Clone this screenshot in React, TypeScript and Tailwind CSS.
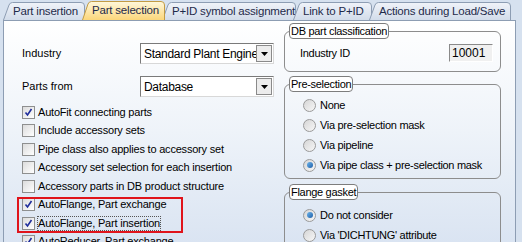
import React from 'react';

const font = { fontFamily: '"Liberation Sans", Arial, sans-serif' };

const tabs = [
  { label: 'Part insertion', w: 82 },
  { label: 'Part selection', w: 83, active: true },
  { label: 'P+ID symbol assignment', w: 134 },
  { label: 'Link to P+ID', w: 79 },
  { label: 'Actions during Load/Save', w: 142 },
];

const Tab = ({ label, w, active }: { label: string; w: number; active?: boolean }) => {
  const h = active ? 19 : 18;
  return (
    <div className={`relative shrink-0 -mr-[3px] ${active ? 'z-10 -mt-[1px] h-[19px]' : 'h-[18px]'}`} style={{ width: w }}>
      <svg className="absolute inset-0" width={w} height={h} viewBox={`0 0 ${w} ${h}`}>
        <defs>
          <linearGradient id={`g-${w}`} x1="0" y1="0" x2="0" y2="1">
            <stop offset="0" stopColor={active ? '#fff8dc' : '#f0f3f9'} />
            <stop offset="1" stopColor={active ? '#fbd67a' : '#d2dcea'} />
          </linearGradient>
        </defs>
        <path
          d={`M0.5 ${h} L6 3 Q7 0.5 9.5 0.5 L${w - 4} 0.5 Q${w - 0.5} 0.5 ${w - 0.5} 4 L${w - 0.5} ${h}`}
          fill={`url(#g-${w})`}
          stroke={active ? '#c29b45' : '#8d9db3'}
        />
      </svg>
      <span className="relative block whitespace-nowrap pl-[10px] pt-[2px] text-[11.5px] leading-[15px] tracking-[-0.2px] text-[#1e2a4a]">
        {label}
      </span>
    </div>
  );
};

const Check = ({ checked }: { checked?: boolean }) => (
  <span className="flex h-[13px] w-[13px] shrink-0 items-center justify-center border border-[#8e8f8f] bg-gradient-to-br from-[#dcdcdc] to-white">
    {checked && (
      <svg width="9" height="9" viewBox="0 0 9 9">
        <path d="M1.5 4.5 L3.5 7 L7.5 1" fill="none" stroke="#1f2d9b" strokeWidth="1.6" />
      </svg>
    )}
  </span>
);

const Radio = ({ on }: { on?: boolean }) => (
  <span className="flex h-[13px] w-[13px] shrink-0 items-center justify-center rounded-full border border-[#9a9a9a] bg-gradient-to-br from-[#d6d6d6] to-[#f7f7f7]">
    {on && <span className="h-[6px] w-[6px] rounded-full bg-gradient-to-br from-[#6fb6ec] to-[#1c5fa8]" />}
  </span>
);

const Select = ({ value }: { value: string }) => (
  <div className="flex h-[21px] w-[134px] items-center border border-[#7a7a7a] border-r-[#d8d8d8] border-b-[#d8d8d8] bg-white pl-[3px]">
    <span className="flex-1 overflow-hidden whitespace-nowrap text-[12px] tracking-[-0.3px] text-black">{value}</span>
    <span className="mr-[1px] flex h-[17px] w-[16px] items-center justify-center border border-[#8a8a8a] bg-[#ececec]">
      <svg width="7" height="4" viewBox="0 0 7 4"><path d="M0 0 H7 L3.5 4 Z" fill="#000" /></svg>
    </span>
  </div>
);

const CheckRow = ({ label, checked, dotted }: { label: string; checked?: boolean; dotted?: boolean }) => (
  <div className="flex h-[18.5px] items-center gap-[3px]">
    <Check checked={checked} />
    <span
      className={`whitespace-nowrap text-[11px] leading-[13px] tracking-[-0.2px] text-black ${dotted ? 'outline outline-1 outline-dotted outline-[#555]' : ''}`}
    >
      {label}
    </span>
  </div>
);

const RadioRow = ({ label, on }: { label: string; on?: boolean }) => (
  <div className="flex h-[20px] items-center gap-[4px]">
    <Radio on={on} />
    <span className="whitespace-nowrap text-[11px] tracking-[-0.3px] text-black">{label}</span>
  </div>
);

const Group = ({ title, children, className }: { title: string; children: React.ReactNode; className?: string }) => (
  <div className={`relative rounded-[6px] border border-[#8d8d8d] ${className ?? ''}`}>
    <span className="absolute -top-[9px] left-[4px] whitespace-nowrap rounded-[4px] border border-[#7d7d7d] bg-white px-[1px] text-[11px] leading-[14px] tracking-[-0.3px] text-black">
      {title}
    </span>
    {children}
  </div>
);

export default function App() {
  return (
    <div className="h-[242px] w-[522px] overflow-hidden bg-[#d6e1ef]" style={font}>
      <div className="flex pl-[3px] pt-[2px]">
        {tabs.map((t) => (
          <Tab key={t.label} {...t} />
        ))}
      </div>
      <div className="ml-[3px] flex h-[223px] w-[513px] border-l border-t border-r border-[#8d9db3] bg-gradient-to-b from-white via-[#eef3f9] to-[#dae4f2]">
        <div className="w-[270px] pl-[18px] pt-[22px]">
          <div className="flex items-center justify-between">
            <span className="text-[11px] text-black">Industry</span>
            <Select value="Standard Plant Engineering" />
          </div>
          <div className="mt-[12px] flex items-center justify-between">
            <span className="text-[11px] text-black">Parts from</span>
            <Select value="Database" />
          </div>
          <div className="mt-[6px]">
            <CheckRow label="AutoFit connecting parts" checked />
            <CheckRow label="Include accessory sets" />
            <CheckRow label="Pipe class also applies to accessory set" />
            <CheckRow label="Accessory set selection for each insertion" />
            <CheckRow label="Accessory parts in DB product structure" />
            <div className="relative">
              <CheckRow label="AutoFlange, Part exchange" checked />
              <CheckRow label="AutoFlange, Part insertion" checked dotted />
              {/* highlight annotation */}
              <div className="absolute -left-[5px] top-[1px] bottom-[0px] w-[166px] border-2 border-[#e0141b]" />
            </div>
            <CheckRow label="AutoReducer, Part exchange" checked />
          </div>
        </div>
        <div className="ml-[10px] w-[217px] pt-[10px]">
          <Group title="DB part classification" className="h-[41px]">
            <div className="flex items-center justify-between pl-[15px] pr-[7px] pt-[12px]">
              <span className="text-[11px] tracking-[-0.3px] text-black">Industry ID</span>
              <span className="h-[18px] w-[44px] border border-[#8a8a8a] border-r-white border-b-white bg-[#f0f0f0] pl-[2px] text-[12px] leading-[16px] text-black">10001</span>
            </div>
          </Group>
          <Group title="Pre-selection" className="mt-[12px] h-[95px]">
            <div className="pl-[18px] pt-[10px]">
              <RadioRow label="None" />
              <RadioRow label="Via pre-selection mask" />
              <RadioRow label="Via pipeline" />
              <RadioRow label="Via pipe class + pre-selection mask" on />
            </div>
          </Group>
          <Group title="Flange gasket" className="mt-[13px] h-[70px]">
            <div className="pl-[18px] pt-[12px]">
              <RadioRow label="Do not consider" on />
              <RadioRow label="Via 'DICHTUNG' attribute" />
            </div>
          </Group>
        </div>
      </div>
    </div>
  );
}
